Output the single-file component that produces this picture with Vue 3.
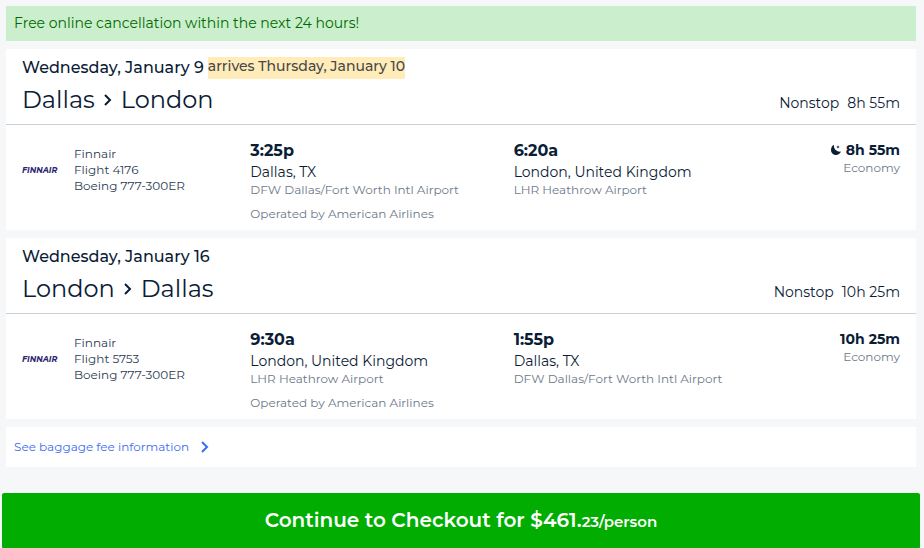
<script setup>
const trips = [
  {
    date: 'Wednesday, January 9',
    arrives: 'arrives Thursday, January 10',
    from: 'Dallas',
    to: 'London',
    stops: 'Nonstop',
    duration: '8h 55m',
    overnight: true,
    airline: 'Finnair',
    flight: 'Flight 4176',
    aircraft: 'Boeing 777-300ER',
    cabin: 'Economy',
    operator: 'Operated by American Airlines',
    departure: { time: '3:25p', city: 'Dallas, TX', airport: 'DFW Dallas/Fort Worth Intl Airport' },
    arrival: { time: '6:20a', city: 'London, United Kingdom', airport: 'LHR Heathrow Airport' },
  },
  {
    date: 'Wednesday, January 16',
    arrives: '',
    from: 'London',
    to: 'Dallas',
    stops: 'Nonstop',
    duration: '10h 25m',
    overnight: false,
    airline: 'Finnair',
    flight: 'Flight 5753',
    aircraft: 'Boeing 777-300ER',
    cabin: 'Economy',
    operator: 'Operated by American Airlines',
    departure: { time: '9:30a', city: 'London, United Kingdom', airport: 'LHR Heathrow Airport' },
    arrival: { time: '1:55p', city: 'Dallas, TX', airport: 'DFW Dallas/Fort Worth Intl Airport' },
  },
]
</script>

<template>
  <main class="page">
    <div class="content">
      <p class="banner">Free online cancellation within the next 24 hours!</p>

      <section v-for="trip in trips" :key="trip.flight" class="card">
        <header class="card-head">
          <div>
            <p class="date">
              <span>{{ trip.date }}</span>
              <span v-if="trip.arrives" class="arrives">{{ trip.arrives }}</span>
            </p>
            <h2 class="route">
              <span>{{ trip.from }}</span>
              <svg class="route-arrow" viewBox="0 0 10 12" aria-hidden="true">
                <path d="M2 1 7 6 2 11" />
              </svg>
              <span>{{ trip.to }}</span>
            </h2>
          </div>
          <p class="summary">
            <span>{{ trip.stops }}</span>
            <span>{{ trip.duration }}</span>
          </p>
        </header>

        <div class="leg">
          <div class="carrier">
            <span class="logo">FINNAIR</span>
            <div class="details">
              <p>{{ trip.airline }}</p>
              <p>{{ trip.flight }}</p>
              <p>{{ trip.aircraft }}</p>
            </div>
          </div>
          <div>
            <p class="time">{{ trip.departure.time }}</p>
            <p class="city">{{ trip.departure.city }}</p>
            <p class="note">{{ trip.departure.airport }}</p>
            <p class="note operator">{{ trip.operator }}</p>
          </div>
          <div>
            <p class="time">{{ trip.arrival.time }}</p>
            <p class="city">{{ trip.arrival.city }}</p>
            <p class="note">{{ trip.arrival.airport }}</p>
          </div>
          <div class="totals">
            <p class="length">
              <svg v-if="trip.overnight" class="moon" viewBox="0 0 12 12" role="img" aria-label="Overnight flight">
                <path d="M4 .8C3.200 4.300 6.200 8.200 11 7.600 10 9.900 8.200 11 6 11 3.200 11 1 8.800 1 6 1 3.600 2.200 1.600 4 .8Z" />
                <path d="M8 1.200 8.500 2.500 9.800 3 8.500 3.500 8 4.800 7.500 3.500 6.200 3 7.500 2.500Z" />
              </svg>
              <span>{{ trip.duration }}</span>
            </p>
            <p class="cabin">{{ trip.cabin }}</p>
          </div>
        </div>
      </section>

      <a class="baggage" href="#baggage">
        <span>See baggage fee information</span>
        <svg class="chevron" viewBox="0 0 8 12" aria-hidden="true">
          <path d="M1 1 6 6 1 11" />
        </svg>
      </a>
    </div>

    <button class="checkout" type="button">
      Continue to Checkout for $461.<small>23/person</small>
    </button>
  </main>
</template>

<style>
body {
  background: #f6f7f9;
}
</style>

<style scoped>
.page {
  padding: 6px 4px 1px 2px;
  font-family: Montserrat, Inter, "Open Sans", sans-serif;
  color: #0a1c36;
}

.page p,
.page h2 {
  margin: 0;
}

.content {
  display: flex;
  flex-direction: column;
  gap: 8px;
  padding: 0 4px;
}

.page .banner {
  padding: 7px 8px 8px;
  background: #cbefcc;
  color: #006900;
  font-size: 14px;
  line-height: 20px;
}

.card,
.baggage {
  background: #fff;
}

.card-head {
  display: flex;
  justify-content: space-between;
  align-items: flex-end;
  padding: 8px 16px;
  border-bottom: 1px solid #cdd1d6;
}

.date {
  display: flex;
  gap: 4px;
  font-size: 16px;
  font-weight: 500;
  line-height: 22px;
}

.arrives {
  background: #ffecb8;
  color: #484848;
  font-size: 14px;
  line-height: 18px;
}

.route {
  display: flex;
  align-items: center;
  gap: 8px;
  padding-top: 5px;
  font-size: 24px;
  font-weight: 400;
  line-height: 32px;
}

.route-arrow {
  width: 10px;
  height: 12px;
  fill: none;
  stroke: currentColor;
  stroke-width: 2;
}

.summary {
  display: flex;
  gap: 8px;
  padding-bottom: 3px;
  font-size: 14px;
  line-height: 20px;
}

.leg {
  display: grid;
  grid-template-columns: 26% 30% 1fr auto;
  padding: 15px 16px 8px;
}

.carrier {
  display: flex;
  align-items: flex-start;
  gap: 16px;
  padding-top: 6px;
  font-size: 12px;
  line-height: 16px;
}

.logo {
  width: 36px;
  padding-top: 16px;
  color: #2c2470;
  font-size: 8px;
  font-style: italic;
  font-weight: 700;
}

.details {
  color: #2b3b52;
}

.time {
  font-size: 16px;
  font-weight: 700;
  line-height: 22px;
}

.city {
  font-size: 14px;
  line-height: 20px;
}

.note,
.cabin {
  color: #6c7989;
  font-size: 12px;
  line-height: 16px;
}

.page .operator {
  margin-top: 8px;
}

.totals {
  text-align: right;
}

.length {
  display: flex;
  justify-content: flex-end;
  align-items: center;
  gap: 4px;
  font-size: 14px;
  font-weight: 700;
  line-height: 20px;
}

.moon {
  width: 12px;
  height: 12px;
  fill: currentColor;
}

.baggage {
  display: flex;
  align-items: center;
  gap: 12px;
  padding: 10px 8px;
  color: #3a6cf4;
  font-size: 12px;
  line-height: 20px;
  text-decoration: none;
}

.chevron {
  width: 8px;
  height: 12px;
  fill: none;
  stroke: currentColor;
  stroke-width: 2;
}

.checkout {
  display: block;
  width: 100%;
  margin-top: 26px;
  padding: 12px;
  border: 0;
  border-radius: 2px;
  background: #00ad00;
  color: #fff;
  font-family: inherit;
  font-size: 20px;
  font-weight: 600;
  line-height: 30px;
}

.checkout small {
  font-size: 15px;
}
</style>
